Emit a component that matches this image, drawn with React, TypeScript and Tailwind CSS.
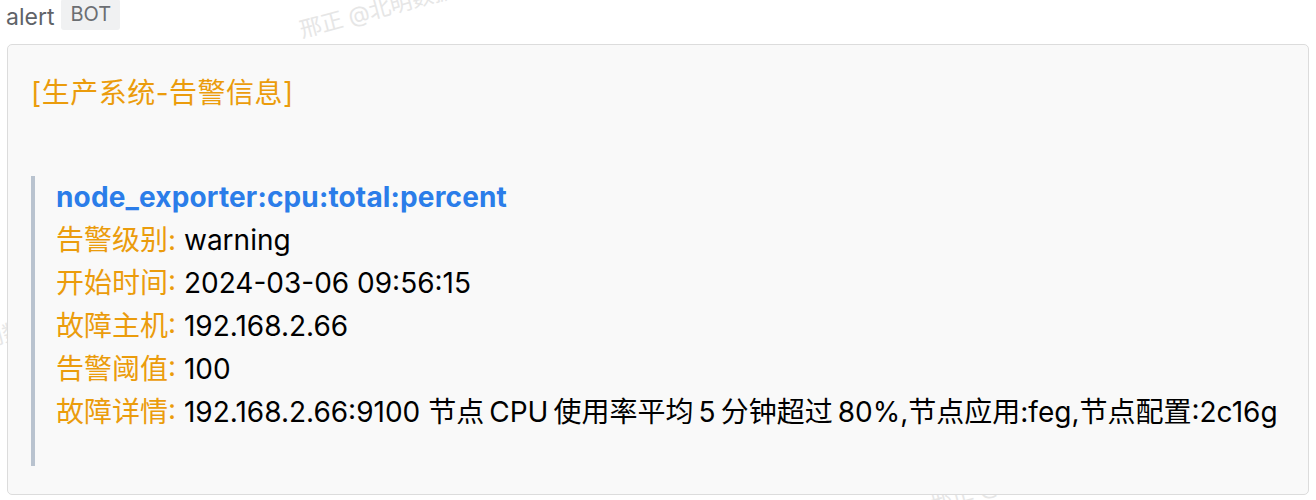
import React from "react";

const font = { fontFamily: 'Inter, "Noto Sans CJK SC", sans-serif' };

function Row({ label, value }: { label: string; value: string }) {
  return (
    <div className="leading-[43px] whitespace-nowrap">
      <span className="text-[#eb9c0c]">{label}:</span>{" "}
      <span className="text-black">{value}</span>
    </div>
  );
}

export default function App() {
  return (
    <div className="relative w-[1316px] h-[500px] bg-white overflow-hidden" style={font}>
      {/* watermarks behind the card */}
      <div className="absolute left-[300px] top-[14px] -rotate-[15deg] origin-left text-[22px] text-[#e6e6e6] whitespace-nowrap">
        邢正 @北明数据
      </div>
      <div className="absolute left-[930px] top-[486px] -rotate-[15deg] origin-left text-[22px] text-[#e6e6e6] whitespace-nowrap">
        邢正 @北明数据
      </div>
      <div className="absolute left-[-40px] top-[330px] -rotate-[15deg] origin-left text-[22px] text-[#e6e6e6] whitespace-nowrap">
        北明数据
      </div>

      <div className="relative flex flex-col">
        <div className="flex items-center h-[34px] pl-[6px] gap-[7px]">
          <span className="text-[23px] text-[#5f6368] leading-none">alert</span>
          <span className="bg-[#f0f1f2] text-[#6b6e72] text-[20px] leading-none rounded-[3px] px-[9px] pt-[5px] pb-[6px] -mt-[6px]">
            BOT
          </span>
        </div>
        <div className="ml-[7px] mr-[7px] mt-[10px] h-[451px] bg-[#f9f9f9] border border-[#dcdcdc] rounded-[5px] pt-[27px] pl-[23px] text-[28px]">
          <div className="leading-[43px] text-[#eb9c0c] tracking-[0.5px]">[生产系统-告警信息]</div>
          <div className="h-[61px]" />
          <div className="border-l-[4px] border-[#b9c3cf] pl-[21px] pb-[32px]">
            <div className="leading-[43px] font-bold tracking-[0.15px] text-[#2b7de9]">node_exporter:cpu:total:percent</div>
            <Row label="告警级别" value="warning" />
            <Row label="开始时间" value="2024-03-06 09:56:15" />
            <Row label="故障主机" value="192.168.2.66" />
            <Row label="告警阈值" value="100" />
            <Row
              label="故障详情"
              value={"192.168.2.66:9100 节点\u2009CPU\u2009使用率平均\u20095\u2009分钟超过\u200980%,节点应用:feg,节点配置:2c16g"}
            />
          </div>
        </div>
      </div>
    </div>
  );
}
